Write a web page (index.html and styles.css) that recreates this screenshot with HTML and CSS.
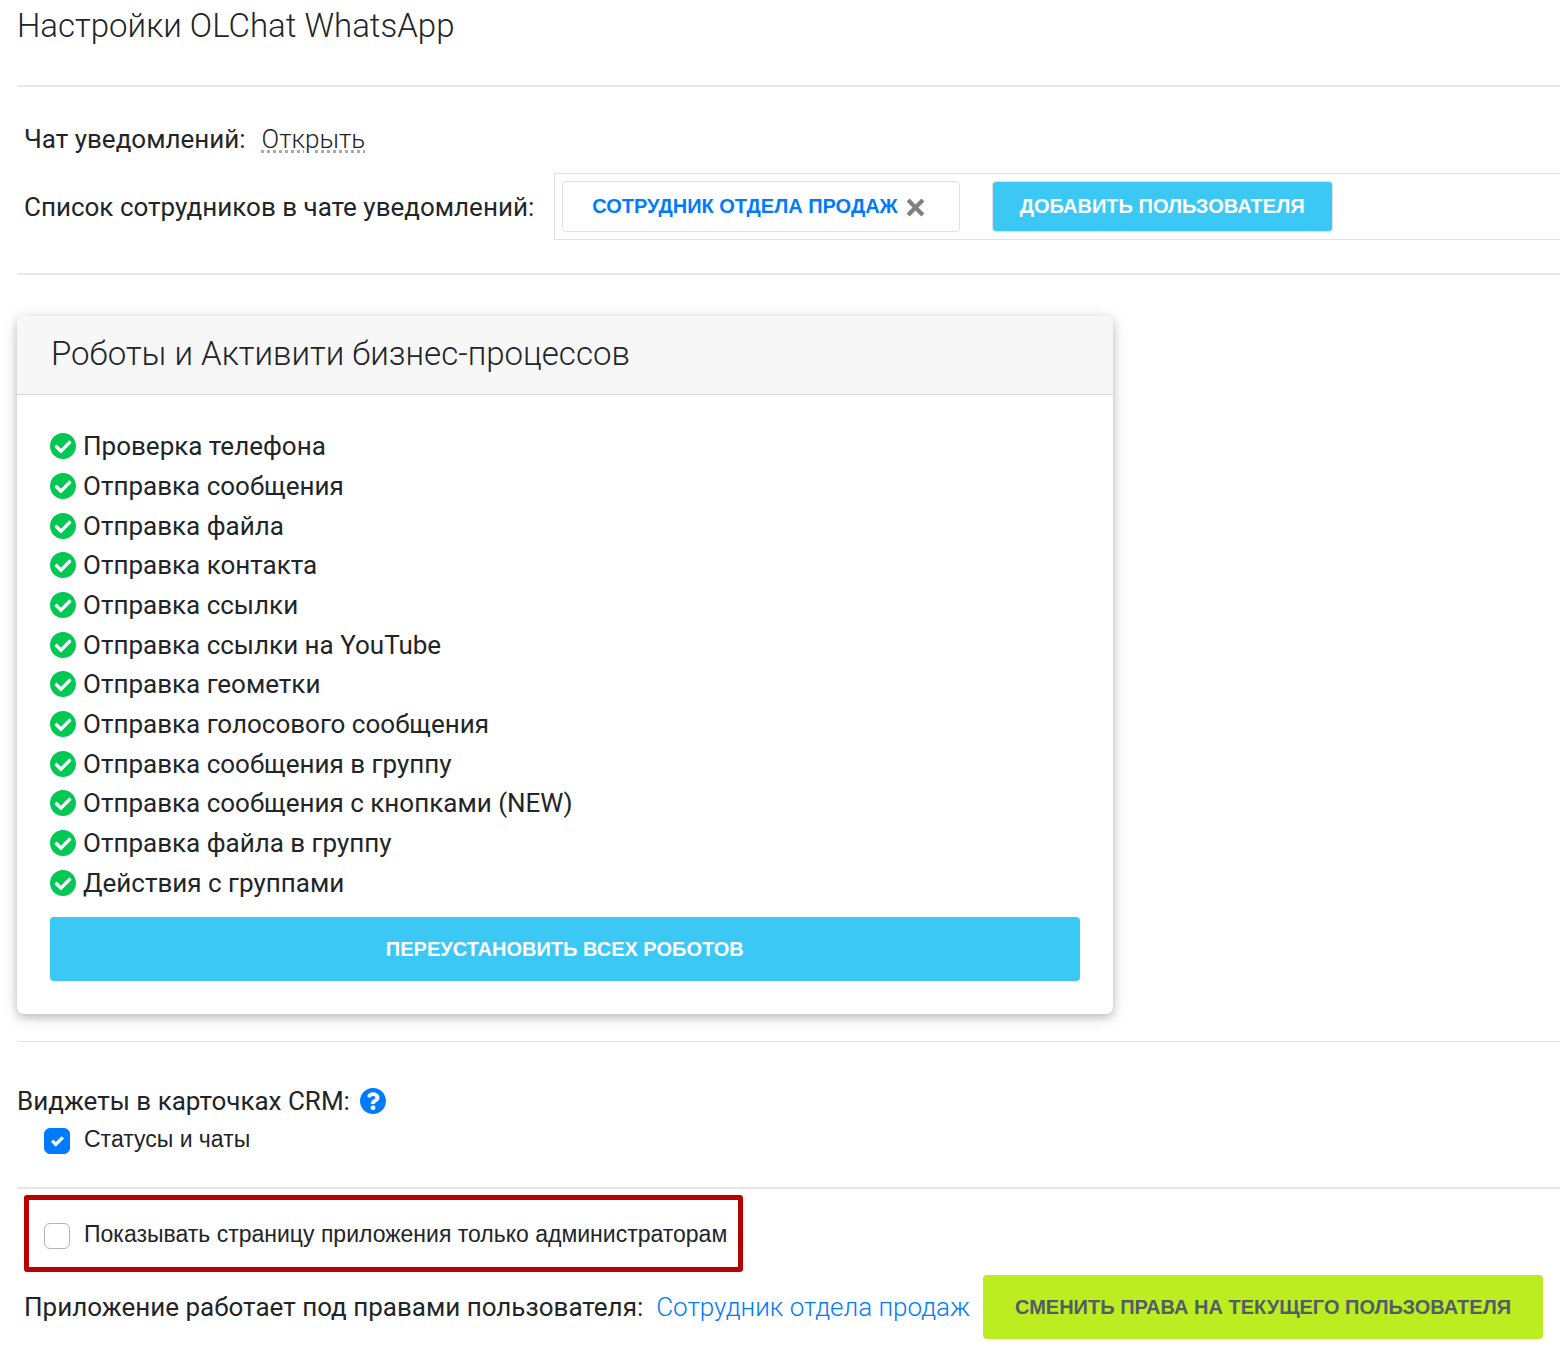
FILE: index.html
```html
<!DOCTYPE html>
<html lang="ru">
<head>
<meta charset="utf-8">
<meta name="viewport" content="width=device-width, initial-scale=1">
<title>Настройки OLChat WhatsApp</title>
<link rel="stylesheet" href="styles.css">
</head>
<body>
<svg class="sprite" aria-hidden="true">
  <symbol id="icon-check" viewBox="8 8 496 496"><path d="M504 256c0 136.967-111.033 248-248 248S8 392.967 8 256 119.033 8 256 8s248 111.033 248 248zM227.314 387.314l184-184c6.248-6.248 6.248-16.379 0-22.627l-22.627-22.627c-6.248-6.249-16.379-6.249-22.628 0L216 308.118l-70.059-70.059c-6.248-6.248-16.379-6.248-22.628 0l-22.627 22.627c-6.248 6.248-6.248 16.379 0 22.627l104 104c6.249 6.249 16.379 6.249 22.628.001z"/></symbol>
</svg>
<main class="page">
  <header class="page-header">
    <h1 class="title">Настройки OLChat WhatsApp</h1>
  </header>

  <section class="notify">
    <p class="notify-row">Чат уведомлений: <a class="open-link" href="#chat">Открыть</a></p>
    <div class="notify-row notify-users">
      <span>Список сотрудников в чате уведомлений:</span>
      <div class="users">
        <div class="user-chip">
          <a class="user-name" href="#user">Сотрудник отдела продаж</a>
          <button class="remove" type="button" aria-label="Удалить">
            <svg class="remove-icon" viewBox="0 0 18 18"><path d="M2 2l14 14M16 2L2 16"/></svg>
          </button>
        </div>
        <button class="btn btn-small" type="button">Добавить пользователя</button>
      </div>
    </div>
  </section>

  <section class="robots">
    <div class="card">
      <h2 class="title card-header">Роботы и Активити бизнес-процессов</h2>
      <div class="card-body">
        <ul class="robot-list">
          <li><svg class="icon"><use href="#icon-check"/></svg>Проверка телефона</li>
          <li><svg class="icon"><use href="#icon-check"/></svg>Отправка сообщения</li>
          <li><svg class="icon"><use href="#icon-check"/></svg>Отправка файла</li>
          <li><svg class="icon"><use href="#icon-check"/></svg>Отправка контакта</li>
          <li><svg class="icon"><use href="#icon-check"/></svg>Отправка ссылки</li>
          <li><svg class="icon"><use href="#icon-check"/></svg>Отправка ссылки на YouTube</li>
          <li><svg class="icon"><use href="#icon-check"/></svg>Отправка геометки</li>
          <li><svg class="icon"><use href="#icon-check"/></svg>Отправка голосового сообщения</li>
          <li><svg class="icon"><use href="#icon-check"/></svg>Отправка сообщения в группу</li>
          <li><svg class="icon"><use href="#icon-check"/></svg>Отправка сообщения с кнопками (NEW)</li>
          <li><svg class="icon"><use href="#icon-check"/></svg>Отправка файла в группу</li>
          <li><svg class="icon"><use href="#icon-check"/></svg>Действия с группами</li>
        </ul>
        <button class="btn" type="button">Переустановить всех роботов</button>
      </div>
    </div>
  </section>

  <section class="widgets">
    <p class="widgets-title">Виджеты в карточках CRM:
      <a class="help" href="#help" aria-label="Справка"><svg class="icon" viewBox="8 8 496 496"><path d="M504 256c0 136.997-111.043 248-248 248S8 392.997 8 256C8 119.083 119.043 8 256 8s248 111.083 248 248zM262.655 90c-54.497 0-89.255 22.957-116.549 63.758-3.536 5.286-2.353 12.415 2.715 16.258l34.699 26.31c5.205 3.947 12.621 3.008 16.665-2.122 17.864-22.658 30.113-35.797 57.303-35.797 20.429 0 45.698 13.148 45.698 32.958 0 14.976-12.363 22.667-32.534 33.976C247.128 238.528 216 254.941 216 296v4c0 6.627 5.373 12 12 12h56c6.627 0 12-5.373 12-12v-1.333c0-28.462 83.186-29.647 83.186-106.667 0-58.002-60.165-102-116.531-102zM256 338c-25.365 0-46 20.635-46 46 0 25.364 20.635 46 46 46s46-20.636 46-46c0-25.365-20.635-46-46-46z"/></svg></a>
    </p>
    <label class="check"><input class="checkbox" type="checkbox" checked>Статусы и чаты</label>
  </section>

  <section class="access">
    <div class="highlight">
      <label class="check"><input class="checkbox" type="checkbox">Показывать страницу приложения только администраторам</label>
    </div>
    <div class="rights">
      <span>Приложение работает под правами пользователя:</span>
      <a class="rights-user" href="#user">Сотрудник отдела продаж</a>
      <button class="btn btn-green" type="button">Сменить права на текущего пользователя</button>
    </div>
  </section>
</main>
</body>
</html>
```
FILE: styles.css
```css
* {
  box-sizing: border-box;
}

body {
  margin: 0;
  background: #fff;
  color: #212529;
  font: 400 26px/40px Roboto, "Liberation Sans", sans-serif;
}

h1, h2, p, ul {
  margin: 0;
  padding: 0;
}

a {
  color: #007bff;
  text-decoration: none;
}

button {
  border: 0;
  cursor: pointer;
}

.sprite {
  display: none;
}

.page {
  padding-left: 17px;
}

.title {
  font-size: 33px;
  font-weight: 300;
  line-height: 40px;
}

.page-header {
  padding: 6px 0 39px;
}

.notify {
  display: flex;
  flex-direction: column;
  gap: 14px;
  padding: 32px 0 33px 7px;
  border-top: 2px solid #e6e7e7;
  border-bottom: 2px solid #e6e7e7;
}

.notify-row {
  display: flex;
  align-items: center;
  gap: 16px;
  white-space: nowrap;
}

.notify-users {
  gap: 20px;
}

.open-link {
  color: #212529;
  font-weight: 300;
  text-decoration: underline dotted #aaa 3px;
  text-underline-offset: 2px;
}

.users {
  display: flex;
  flex: 1;
  gap: 32px;
  padding: 7px;
  border: 1px solid #dee2e6;
  border-right: 0;
}

.user-chip {
  display: flex;
  align-items: center;
  gap: 8px;
  padding: 0 34px 2px 29px;
  border: 1px solid #dee2e6;
  border-radius: 4px;
}

.user-name,
.btn {
  font: 700 20px/24px "Liberation Sans", Arial, sans-serif;
  text-transform: uppercase;
}

.remove {
  display: flex;
  padding: 3px 0 0;
  background: none;
}

.remove-icon {
  width: 19px;
  height: 19px;
  fill: none;
  stroke: #808080;
  stroke-width: 4;
}

.btn {
  min-height: 64px;
  padding: 0 32px;
  border-radius: 4px;
  background: #3bc8f5;
  color: #fff;
}

.btn-small {
  min-height: 51px;
  padding: 0 27px 2px;
  border: 1px solid #dee2e6;
}

.btn-green {
  background: #bbed21;
  color: #535c69;
}

.robots {
  padding: 41px 0 27px;
  border-bottom: 1px solid #e3e4e4;
}

.card {
  width: 71%;
  border-radius: 7px;
  box-shadow: 0 3px 8px rgba(0, 0, 0, .22), 0 3px 20px rgba(0, 0, 0, .1);
}

.card-header {
  padding: 18px 34px 20px;
  border-bottom: 1px solid #d8d8d8;
  border-radius: 7px 7px 0 0;
  background: #f7f7f7;
}

.card-body {
  display: flex;
  flex-direction: column;
  gap: 14px;
  padding: 32px 33px 33px;
}

.robot-list {
  display: grid;
  grid-auto-rows: 1fr;
  min-height: 476px;
  line-height: 39px;
  list-style: none;
}

.robot-list li {
  display: flex;
  align-items: center;
  gap: 7px;
}

.icon {
  flex: none;
  width: 26px;
  height: 26px;
  margin-bottom: 1px;
  fill: #00c853;
}

.widgets {
  padding: 39px 0 30px;
  border-bottom: 2px solid #e6e7e7;
}

.widgets-title {
  display: flex;
  align-items: center;
  gap: 10px;
}

.help {
  display: flex;
}

.help .icon {
  fill: #007bff;
}

.check {
  display: flex;
  align-items: center;
  gap: 14px;
  padding-left: 27px;
  font: 400 23px/36px "Liberation Sans", Arial, sans-serif;
}

.checkbox {
  appearance: none;
  flex: none;
  width: 26px;
  height: 26px;
  margin: 4px 0 0;
  border: 1px solid #adb5bd;
  border-radius: 6px;
  background: #fff;
}

.checkbox:checked {
  border-color: #007bff;
  background: #007bff url("data:image/svg+xml,%3Csvg xmlns='http://www.w3.org/2000/svg' viewBox='0 0 8 8'%3E%3Cpath fill='%23fff' d='M6.564.75l-3.59 3.612-1.538-1.55L0 4.26l2.974 2.99L8 2.193z'/%3E%3C/svg%3E") center / 13px no-repeat;
}

.access {
  display: flex;
  flex-direction: column;
  align-items: flex-start;
  gap: 3px;
  padding: 6px 16px 17px 7px;
}

.highlight {
  padding: 16px 11px 15px 0;
  border: 5px solid #b80000;
  border-radius: 3px;
}

.highlight .check {
  padding-left: 15px;
}

.rights {
  display: flex;
  align-items: center;
  gap: 13px;
  white-space: nowrap;
}

.rights-user {
  font-weight: 300;
}
```
